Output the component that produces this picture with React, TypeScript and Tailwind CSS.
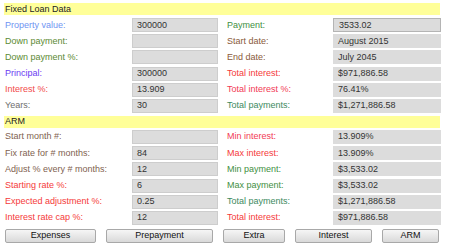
import React from 'react';

type Row = {
  label: string;
  color: string;
  value: string;
  label2: string;
  color2: string;
  value2: string;
  bordered?: boolean;
};

const fixedRows: Row[] = [
  { label: 'Property value:', color: 'text-[#6f94f2]', value: '300000', label2: 'Payment:', color2: 'text-[#3f8f3f]', value2: '3533.02', bordered: true },
  { label: 'Down payment:', color: 'text-[#5b8a33]', value: '', label2: 'Start date:', color2: 'text-[#8a5a3a]', value2: 'August 2015' },
  { label: 'Down payment %:', color: 'text-[#5b8a33]', value: '', label2: 'End date:', color2: 'text-[#8a5a3a]', value2: 'July 2045' },
  { label: 'Principal:', color: 'text-[#6a3cf2]', value: '300000', label2: 'Total interest:', color2: 'text-[#f53a3a]', value2: '$971,886.58' },
  { label: 'Interest %:', color: 'text-[#f24a4a]', value: '13.909', label2: 'Total interest %:', color2: 'text-[#f23a55]', value2: '76.41%' },
  { label: 'Years:', color: 'text-[#6e6e6e]', value: '30', label2: 'Total payments:', color2: 'text-[#3d8a5e]', value2: '$1,271,886.58' },
];

const armRows: Row[] = [
  { label: 'Start month #:', color: 'text-[#7f5f4f]', value: '', label2: 'Min interest:', color2: 'text-[#f23a55]', value2: '13.909%' },
  { label: 'Fix rate for # months:', color: 'text-[#7f5f4f]', value: '84', label2: 'Max interest:', color2: 'text-[#f53a3a]', value2: '13.909%' },
  { label: 'Adjust % every # months:', color: 'text-[#7f5f4f]', value: '12', label2: 'Min payment:', color2: 'text-[#3f8f3f]', value2: '$3,533.02' },
  { label: 'Starting rate %:', color: 'text-[#f53a3a]', value: '6', label2: 'Max payment:', color2: 'text-[#3f8f3f]', value2: '$3,533.02' },
  { label: 'Expected adjustment %:', color: 'text-[#f53a3a]', value: '0.25', label2: 'Total payments:', color2: 'text-[#3d8a5e]', value2: '$1,271,886.58' },
  { label: 'Interest rate cap %:', color: 'text-[#f53a3a]', value: '12', label2: 'Total interest:', color2: 'text-[#f53a3a]', value2: '$971,886.58' },
];

const buttons = [
  { label: 'Expenses', w: 'w-[91px]' },
  { label: 'Prepayment', w: 'w-[107px]' },
  { label: 'Extra', w: 'w-[62px]' },
  { label: 'Interest', w: 'w-[77px]' },
  { label: 'ARM', w: 'w-[57px]' },
];

const SectionRows = ({ rows }: { rows: Row[] }) => (
  <div className="flex flex-col gap-[2.2px]">
    {rows.map((r, i) => (
      <div key={i} className="flex h-[14px] items-center">
        <div className={`w-[128px] pl-[1px] ${r.color}`}>{r.label}</div>
        <div className="w-[86px] h-full border border-[#cdcdcd] bg-[#dcdcdc] pl-[4px] flex items-center text-[#333]">
          {r.value}
        </div>
        <div className={`w-[115px] pl-[9px] ${r.color2}`}>{r.label2}</div>
        <div
          className={`w-[108px] h-full bg-[#dcdcdc] pl-[5px] flex items-center text-[#333] ${
            r.bordered ? 'border border-[#b4b4b4]' : ''
          }`}
        >
          {r.value2}
        </div>
      </div>
    ))}
  </div>
);

export default function App() {
  return (
    <div
      className="w-[450px] h-[246px] bg-white pt-[3px] pl-[4px] text-[9px] leading-none overflow-hidden"
      style={{ fontFamily: '"Liberation Sans", Arial, sans-serif' }}
    >
      <div className="w-[436px] h-[12px] bg-[#ffff99] flex items-center pl-[1px] text-[#222]">Fixed Loan Data</div>
      <div className="mt-[3px]">
        <SectionRows rows={fixedRows} />
      </div>
      <div className="mt-[3px] w-[436px] h-[12px] bg-[#ffff99] flex items-center pl-[1px] text-[#222]">ARM</div>
      <div className="mt-[2px]">
        <SectionRows rows={armRows} />
      </div>
      <div className="mt-[4px] flex gap-[10px] pl-[1px]">
        {buttons.map((b) => (
          <button
            key={b.label}
            className={`${b.w} h-[14px] border border-[#a8a8a8] rounded-[2px] bg-gradient-to-b from-[#f6f6f6] to-[#d9d9d9] text-[#111] text-[9px] leading-none flex items-center justify-center`}
          >
            {b.label}
          </button>
        ))}
      </div>
    </div>
  );
}
